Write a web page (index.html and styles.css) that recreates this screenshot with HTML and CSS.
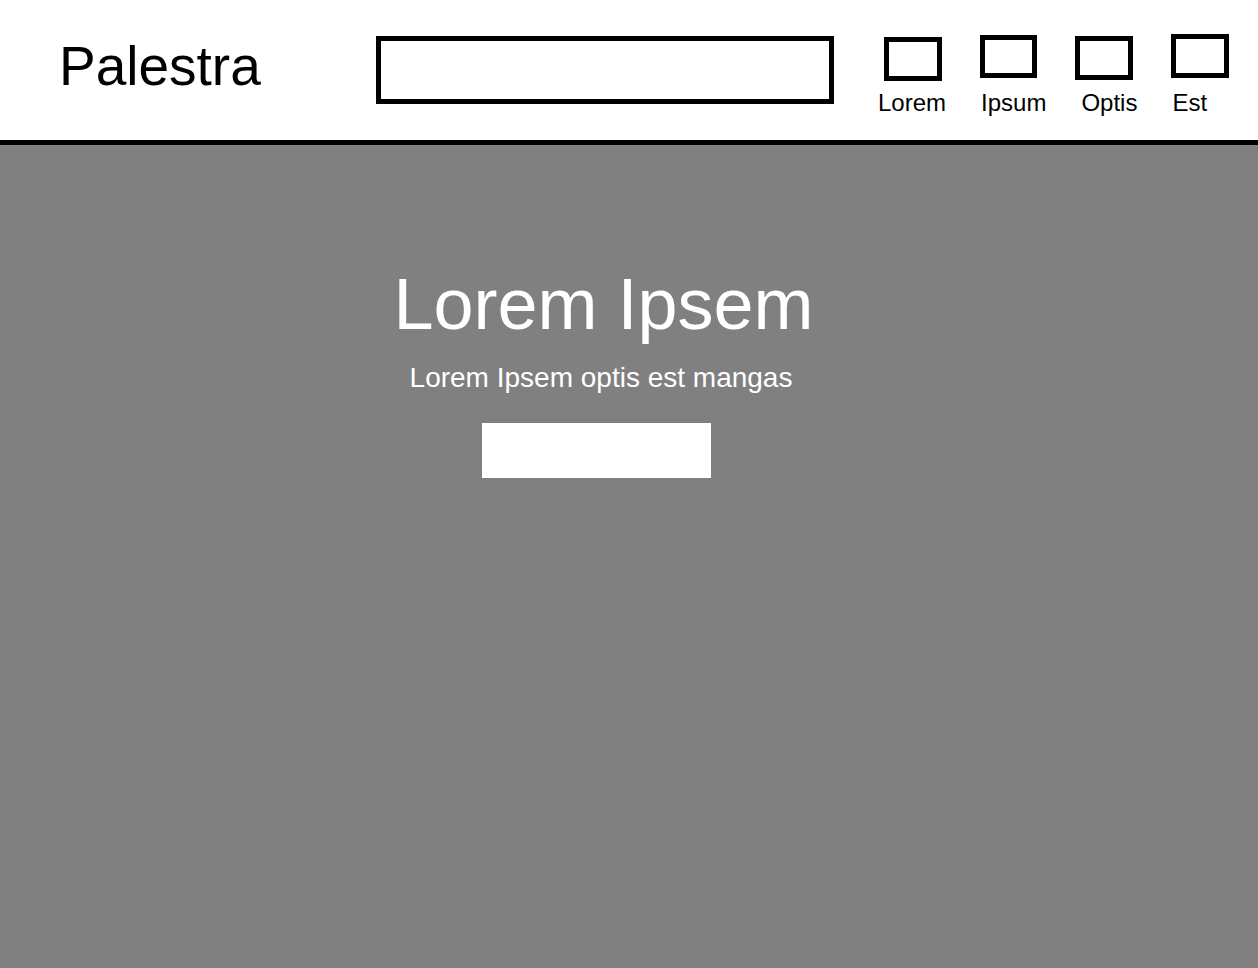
FILE: index.html
```html
<!DOCTYPE html>
<html lang="en">
<head>
<meta charset="utf-8">
<title>Palestra</title>
<link rel="stylesheet" href="styles.css">
</head>
<body>
<header class="topbar">
  <div class="logo">Palestra</div>
  <div class="search"></div>
  <nav class="nav">
    <div class="nav-icons">
      <span class="nav-icon nav-icon-1"></span>
      <span class="nav-icon nav-icon-2"></span>
      <span class="nav-icon nav-icon-3"></span>
      <span class="nav-icon nav-icon-4"></span>
    </div>
    <div class="nav-labels">
      <span class="nav-label">Lorem</span>
      <span class="nav-label">Ipsum</span>
      <span class="nav-label">Optis</span>
      <span class="nav-label">Est</span>
    </div>
  </nav>
</header>
<main class="hero">
  <h1 class="hero-title">Lorem Ipsem</h1>
  <p class="hero-sub">Lorem Ipsem optis est mangas</p>
  <div class="hero-btn"></div>
</main>
</body>
</html>
```
FILE: styles.css
```css
html, body {
  margin: 0;
  padding: 0;
  height: 100%;
}
body {
  font-family: "Liberation Sans", Arial, sans-serif;
  background: #808080;
  display: flex;
  flex-direction: column;
}
.topbar {
  flex-shrink: 0;
  height: 140px;
  background: #fff;
  border-bottom: 5px solid #000;
  display: flex;
  align-items: flex-start;
}
.logo {
  flex-shrink: 0;
  width: 317px;
  margin-left: 59px;
  margin-top: 34px;
  font-size: 55px;
  line-height: 64px;
  color: #000;
}
.search {
  flex-shrink: 0;
  box-sizing: border-box;
  width: 458px;
  height: 68px;
  margin-top: 36px;
  border: 5px solid #000;
  background: #fff;
}
.nav {
  margin-left: 43px;
  margin-top: 34px;
  display: flex;
  flex-direction: column;
}
.nav-icons {
  display: flex;
  align-items: flex-start;
  gap: 38px;
  padding-left: 7px;
}
.nav-icon {
  display: block;
  box-sizing: border-box;
  width: 58px;
  height: 44px;
  border: 5px solid #000;
}
.nav-icon-1 { margin-top: 3px; }
.nav-icon-2 { margin-top: 1px; height: 43px; width: 57px; }
.nav-icon-3 { margin-top: 2px; }
.nav-icon-4 { margin-top: 0; }
.nav-labels {
  display: flex;
  gap: 35px;
  margin-top: 8px;
  padding-left: 1px;
}
.nav-label {
  font-size: 24px;
  line-height: 28px;
  color: #000;
}
.hero {
  flex: 1;
  display: flex;
  flex-direction: column;
  align-items: center;
  padding-top: 118px;
  padding-right: 58px;
  color: #fff;
}
.hero-title {
  margin: 0;
  padding-left: 7px;
  font-size: 72px;
  font-weight: normal;
  line-height: 82px;
}
.hero-sub {
  margin: 17px 0 0;
  padding-left: 2px;
  font-size: 28px;
  line-height: 32px;
}
.hero-btn {
  width: 229px;
  height: 55px;
  margin-top: 29px;
  margin-right: 7px;
  background: #fff;
}
```
